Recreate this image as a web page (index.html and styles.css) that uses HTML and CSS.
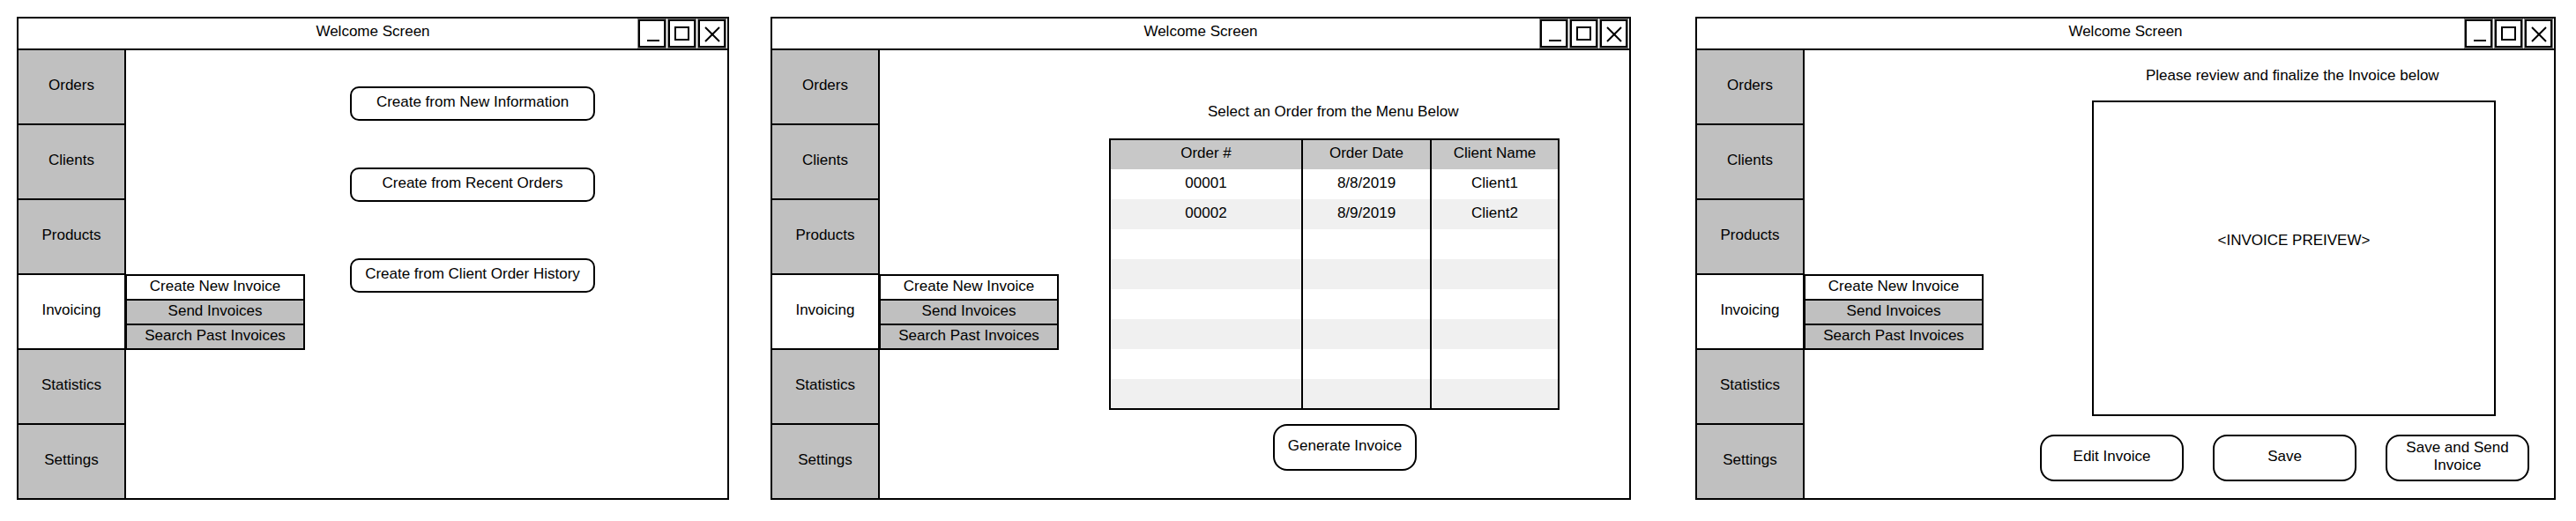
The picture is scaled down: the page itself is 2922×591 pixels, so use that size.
FILE: index.html
```html
<!DOCTYPE html>
<html lang="en">
<head>
<meta charset="utf-8">
<title>Invoicing Wireframes</title>
<link rel="stylesheet" href="styles.css">
</head>
<body>
<div class="canvas">

  <section class="window w1">
    <header class="titlebar">
      <span class="title">Welcome Screen</span>
      <div class="controls">
        <span class="ctl"><svg viewBox="0 0 27 28" width="27" height="28"><line x1="8" y1="22" x2="22" y2="22"/></svg></span>
        <span class="ctl"><svg viewBox="0 0 27 28" width="27" height="28"><rect x="6" y="7" width="15" height="14"/></svg></span>
        <span class="ctl"><svg viewBox="0 0 27 28" width="27" height="28"><line x1="6" y1="7" x2="22" y2="23"/><line x1="22" y1="7" x2="6" y2="23"/></svg></span>
      </div>
    </header>
    <div class="body">
      <nav class="sidebar">
        <div class="nav-item">Orders</div>
        <div class="nav-item">Clients</div>
        <div class="nav-item">Products</div>
        <div class="nav-item active">Invoicing</div>
        <div class="nav-item">Statistics</div>
        <div class="nav-item">Settings</div>
      </nav>
      <div class="submenu">
        <div class="sub-item active">Create New Invoice</div>
        <div class="sub-item">Send Invoices</div>
        <div class="sub-item">Search Past Invoices</div>
      </div>
      <main class="content c1">
        <button class="btn btn-wide">Create from New Information</button>
        <button class="btn btn-wide btn-second">Create from Recent Orders</button>
        <button class="btn btn-wide btn-third">Create from Client Order History</button>
      </main>
    </div>
  </section>

  <section class="window w2">
    <header class="titlebar">
      <span class="title">Welcome Screen</span>
      <div class="controls">
        <span class="ctl"><svg viewBox="0 0 27 28" width="27" height="28"><line x1="8" y1="22" x2="22" y2="22"/></svg></span>
        <span class="ctl"><svg viewBox="0 0 27 28" width="27" height="28"><rect x="6" y="7" width="15" height="14"/></svg></span>
        <span class="ctl"><svg viewBox="0 0 27 28" width="27" height="28"><line x1="6" y1="7" x2="22" y2="23"/><line x1="22" y1="7" x2="6" y2="23"/></svg></span>
      </div>
    </header>
    <div class="body">
      <nav class="sidebar">
        <div class="nav-item">Orders</div>
        <div class="nav-item">Clients</div>
        <div class="nav-item">Products</div>
        <div class="nav-item active">Invoicing</div>
        <div class="nav-item">Statistics</div>
        <div class="nav-item">Settings</div>
      </nav>
      <div class="submenu">
        <div class="sub-item active">Create New Invoice</div>
        <div class="sub-item">Send Invoices</div>
        <div class="sub-item">Search Past Invoices</div>
      </div>
      <main class="content c2">
        <p class="prompt">Select an Order from the Menu Below</p>
        <table class="orders">
          <thead>
            <tr><th class="col-num">Order #</th><th class="col-date">Order Date</th><th>Client Name</th></tr>
          </thead>
          <tbody>
            <tr><td>00001</td><td>8/8/2019</td><td>Client1</td></tr>
            <tr><td>00002</td><td>8/9/2019</td><td>Client2</td></tr>
            <tr><td></td><td></td><td></td></tr>
            <tr><td></td><td></td><td></td></tr>
            <tr><td></td><td></td><td></td></tr>
            <tr><td></td><td></td><td></td></tr>
            <tr><td></td><td></td><td></td></tr>
            <tr><td></td><td></td><td></td></tr>
          </tbody>
        </table>
        <button class="btn btn-gen">Generate Invoice</button>
      </main>
    </div>
  </section>

  <section class="window w3">
    <header class="titlebar">
      <span class="title">Welcome Screen</span>
      <div class="controls">
        <span class="ctl"><svg viewBox="0 0 27 28" width="27" height="28"><line x1="8" y1="22" x2="22" y2="22"/></svg></span>
        <span class="ctl"><svg viewBox="0 0 27 28" width="27" height="28"><rect x="6" y="7" width="15" height="14"/></svg></span>
        <span class="ctl"><svg viewBox="0 0 27 28" width="27" height="28"><line x1="6" y1="7" x2="22" y2="23"/><line x1="22" y1="7" x2="6" y2="23"/></svg></span>
      </div>
    </header>
    <div class="body">
      <nav class="sidebar">
        <div class="nav-item">Orders</div>
        <div class="nav-item">Clients</div>
        <div class="nav-item">Products</div>
        <div class="nav-item active">Invoicing</div>
        <div class="nav-item">Statistics</div>
        <div class="nav-item">Settings</div>
      </nav>
      <div class="submenu">
        <div class="sub-item active">Create New Invoice</div>
        <div class="sub-item">Send Invoices</div>
        <div class="sub-item">Search Past Invoices</div>
      </div>
      <main class="content c3">
        <p class="prompt">Please review and finalize the Invoice below</p>
        <div class="preview">&lt;INVOICE PREIVEW&gt;</div>
        <div class="actions">
          <button class="btn btn-act">Edit Invoice</button>
          <button class="btn btn-act">Save</button>
          <button class="btn btn-act">Save and Send Invoice</button>
        </div>
      </main>
    </div>
  </section>

</div>
</body>
</html>
```

FILE: styles.css
```css
* {
  box-sizing: border-box;
}

html,
body {
  height: 591px;
  overflow: hidden;
}

body {
  margin: 0;
  background: #ffffff;
  color: #000000;
  font-family: "Liberation Sans", Arial, sans-serif;
  font-size: 17px;
}

.canvas {
  display: flex;
  align-items: flex-start;
  height: 591px;
  padding-top: 19px;
}

.window {
  position: relative;
  display: flex;
  flex-direction: column;
  height: 548px;
  border: 2px solid #000;
  background: #fff;
}

.w1 { width: 808px; margin-left: 19px; }
.w2 { width: 976px; margin-left: 47px; }
.w3 { width: 976px; margin-left: 73px; }

.titlebar {
  position: relative;
  height: 36px;
  flex: none;
  border-bottom: 2px solid #000;
  display: flex;
  align-items: center;
  justify-content: center;
  padding-bottom: 4px;
}

.controls {
  position: absolute;
  top: 1px;
  right: 2px;
  display: flex;
  gap: 3px;
}

.ctl {
  width: 31px;
  height: 32px;
  border: 2px solid #000;
  box-shadow: 0 0 0 1px #8a8a8a;
  display: flex;
  align-items: center;
  justify-content: center;
  background: #fff;
}

.ctl svg {
  stroke: #000;
  stroke-width: 2;
  fill: none;
}

.body {
  position: relative;
  flex: 1;
  display: flex;
}

.sidebar {
  width: 122px;
  flex: none;
  border-right: 2px solid #000;
  display: flex;
  flex-direction: column;
}

.nav-item {
  flex: 1;
  background: #c0c0c0;
  display: flex;
  align-items: center;
  justify-content: center;
  padding-bottom: 3px;
}

.nav-item + .nav-item {
  border-top: 2px solid #000;
}

.nav-item.active {
  background: #fff;
}

.submenu {
  position: absolute;
  top: 254px;
  left: 121px;
  width: 204px;
  height: 86px;
  border: 2px solid #000;
  display: flex;
  flex-direction: column;
  z-index: 2;
}

.sub-item {
  flex: 1;
  background: #c0c0c0;
  display: flex;
  align-items: center;
  justify-content: center;
  padding-bottom: 2px;
}

.sub-item + .sub-item {
  border-top: 2px solid #000;
}

.sub-item.active {
  background: #fff;
}

.content {
  flex: 1;
  display: flex;
  flex-direction: column;
  align-items: flex-start;
}

.btn {
  font: inherit;
  color: inherit;
  background: #fff;
  border: 2px solid #000;
  padding: 0 0 3px;
  display: flex;
  align-items: center;
  justify-content: center;
  text-align: center;
}

.prompt {
  margin: 0;
  line-height: 20px;
  white-space: nowrap;
}

/* Screen 1 */
.c1 {
  padding: 41px 0 0 254px;
}

.btn-wide {
  width: 278px;
  height: 39px;
  border-radius: 10px;
}

.btn-second { margin-top: 53px; }
.btn-third { margin-top: 64px; }

/* Screen 2 */
.c2 {
  padding: 60px 0 0 260px;
}

.c2 .prompt {
  margin-left: 112px;
}

.orders {
  margin-top: 20px;
  width: 511px;
  border-collapse: collapse;
  border: 2px solid #000;
}

.orders th,
.orders td {
  height: 34px;
  padding: 0 0 3px;
  text-align: center;
  font-weight: normal;
  border-left: 2px solid #000;
}

.orders .col-num { width: 218px; }
.orders .col-date { width: 146px; }

.orders thead tr {
  background: #c8c8c8;
}

.orders tbody tr:nth-child(even) {
  background: #f0f0f0;
}

.btn-gen {
  width: 163px;
  height: 53px;
  border-radius: 16px;
  margin: 16px 0 0 186px;
}

/* Screen 3 */
.c3 {
  padding: 19px 0 0 267px;
}

.c3 .prompt {
  margin-left: 120px;
}

.preview {
  margin: 18px 0 0 59px;
  width: 458px;
  height: 358px;
  border: 2px solid #000;
  display: flex;
  justify-content: center;
  padding-top: 147px;
  line-height: 20px;
}

.actions {
  display: flex;
  gap: 33px;
  margin-top: 21px;
}

.btn-act {
  width: 163px;
  height: 53px;
  border-radius: 16px;
  padding: 0 8px 3px;
  line-height: 20px;
}
```
